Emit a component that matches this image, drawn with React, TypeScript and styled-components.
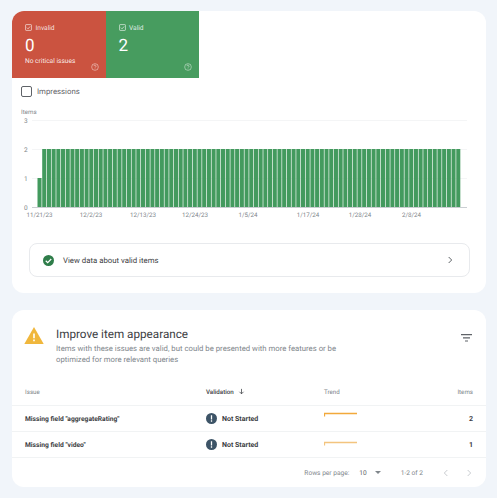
import React from 'react';
import styled, { createGlobalStyle } from 'styled-components';

const GlobalStyle = createGlobalStyle`
  html, body {
    margin: 0;
    background: #f1f5fa;
    font-family: Roboto, "Liberation Sans", sans-serif;
    color: #3c4043;
    text-rendering: geometricPrecision;
  }
`;

const BAR_COUNT = 90;
const BAR_PITCH = 4.705;
const dateLabels = [
  { x: 39.5, text: '11/21/23' },
  { x: 91, text: '12/2/23' },
  { x: 143, text: '12/13/23' },
  { x: 195, text: '12/24/23' },
  { x: 248, text: '1/5/24' },
  { x: 308, text: '1/17/24' },
  { x: 360, text: '1/28/24' },
  { x: 411.5, text: '2/8/24' },
];
const issues = [
  { name: 'Missing field "aggregateRating"', level: 7.5, colour: '#f2a93b', items: 2 },
  { name: 'Missing field "video"', level: 10.5, colour: '#f3c47e', items: 1 },
];

const HelpIcon: React.FC = () => (
  <svg width="8" height="8" viewBox="0 0 24 24" fill="none" stroke="rgba(255,255,255,.65)" strokeWidth="2">
    <circle cx="12" cy="12" r="10" />
    <path d="M9 9.5a3 3 0 1 1 4.6 2.5c-1 .7-1.6 1.3-1.6 2.5M12 16.5v2" />
  </svg>
);

const TileCheck: React.FC = () => (
  <svg width="7" height="7" viewBox="0 0 24 24" fill="none" stroke="rgba(255,255,255,.85)" strokeWidth="2.4">
    <rect x="2" y="2" width="20" height="20" rx="2" />
    <path d="M6.5 12.5l4 4 7-8" />
  </svg>
);

const Chart: React.FC = () => (
  <ChartSvg width="474" height="106" viewBox="0 0 474 106">
    <text x="9" y="9" fontSize="6.2" fill="#80868b">Items</text>
    {[3, 2, 1, 0].map((tick, i) => (
      <g key={tick}>
        <line x1="20" x2="455" y1={15.5 + i * 29} y2={15.5 + i * 29} stroke={tick === 0 ? '#bdc1c6' : '#f1f3f4'} strokeWidth="0.8" />
        <text x="12" y={18 + i * 29} fontSize="6.5" fill="#80868b">{tick}</text>
      </g>
    ))}
    {Array.from({ length: BAR_COUNT }, (_, i) => (
      <rect
        key={i}
        x={25.5 + i * BAR_PITCH}
        y={i === 0 ? 73 : 44}
        width={BAR_PITCH - 0.65}
        height={i === 0 ? 29 : 58}
        fill="#439a5e"
      />
    ))}
  </ChartSvg>
);

const App: React.FC = () => (
  <Page>
    <GlobalStyle />
    <Card>
      <Tiles>
        <Tile $colour="#cb5340">
          <TileLabel><TileCheck />Invalid</TileLabel>
          <TileValue>0</TileValue>
          <TileNote>No critical issues</TileNote>
          <TileHelp><HelpIcon /></TileHelp>
        </Tile>
        <Tile $colour="#479c5f">
          <TileLabel><TileCheck />Valid</TileLabel>
          <TileValue>2</TileValue>
          <TileHelp><HelpIcon /></TileHelp>
        </Tile>
      </Tiles>
      <Impressions>
        <CheckBox />
        Impressions
      </Impressions>
      <Chart />
      <DateAxis>
        {dateLabels.map((label) => (
          <DateLabel key={label.text} style={{ left: label.x - 12 }}>{label.text}</DateLabel>
        ))}
      </DateAxis>
      <ValidLink>
        <svg width="11" height="11" viewBox="0 0 24 24">
          <circle cx="12" cy="12" r="12" fill="#2f7d4a" />
          <path d="M6 12.5l4.2 4.2L18 8.8" fill="none" stroke="#fff" strokeWidth="2.6" />
        </svg>
        <ValidText>View data about valid items</ValidText>
        <svg width="8" height="8" viewBox="0 0 24 24" fill="none" stroke="#5f6368" strokeWidth="3">
          <path d="M8 3l9 9-9 9" />
        </svg>
      </ValidLink>
    </Card>
    <Card>
      <Heading>
        <svg width="20" height="17" viewBox="0 0 24 21">
          <path d="M12 0L24 21H0z" fill="#f0b73c" />
          <path d="M11 8h2v6h-2zM11 15.5h2v2h-2z" fill="#fff" />
        </svg>
        <HeadingText>
          <Title>Improve item appearance</Title>
          <Description>
            Items with these issues are valid, but could be presented with more features or be optimized for more
            relevant queries
          </Description>
        </HeadingText>
        <FilterIcon width="11" height="8" viewBox="0 0 11 8">
          <path d="M0 0h11v1.2H0zM2 3.2h7v1.2H2zM4 6.4h3v1.2H4z" fill="#5f6368" />
        </FilterIcon>
      </Heading>
      <Row $header>
        <HeaderCell>Issue</HeaderCell>
        <SortCell>
          Validation
          <svg width="7" height="7" viewBox="0 0 24 24" fill="none" stroke="#3c4043" strokeWidth="2.6">
            <path d="M12 3v17M5 13l7 7 7-7" />
          </svg>
        </SortCell>
        <HeaderCell>Trend</HeaderCell>
        <HeaderCell $right>Items</HeaderCell>
      </Row>
      {issues.map((issue) => (
        <Row key={issue.name}>
          <IssueName>{issue.name}</IssueName>
          <Status>
            <svg width="11" height="11" viewBox="0 0 24 24">
              <circle cx="12" cy="12" r="12" fill="#3d5467" />
              <path d="M10.6 5h2.8v9h-2.8zM10.6 16h2.8v3h-2.8z" fill="#fff" />
            </svg>
            Not Started
          </Status>
          <svg width="34" height="25" viewBox="0 0 34 25">
            <path d={`M0.5 ${issue.level + 3}V${issue.level}H33`} fill="none" stroke={issue.colour} strokeWidth="1.3" />
          </svg>
          <ItemCount>{issue.items}</ItemCount>
        </Row>
      ))}
      <Pagination>
        <span>Rows per page:</span>
        <PageSize>10</PageSize>
        <Caret />
        <PageRange>1-2 of 2</PageRange>
        <svg width="8" height="8" viewBox="0 0 24 24" fill="none" stroke="#bdc1c6" strokeWidth="2.5">
          <path d="M16 3l-9 9 9 9" />
        </svg>
        <NextIcon width="8" height="8" viewBox="0 0 24 24" fill="none" stroke="#bdc1c6" strokeWidth="2.5">
          <path d="M8 3l9 9-9 9" />
        </NextIcon>
      </Pagination>
    </Card>
  </Page>
);

const Page = styled.div`
  display: flex;
  flex-direction: column;
  gap: 17px;
  width: 474px;
  padding: 11px 11px 11px 12px;
`;

const Card = styled.section`
  background: #fff;
  border-radius: 12px;
  overflow: hidden;
`;

const Tiles = styled.div`
  display: flex;
`;

const Tile = styled.div<{ $colour: string }>`
  position: relative;
  box-sizing: border-box;
  width: 93.5px;
  height: 66.5px;
  padding: 13px 0 0 13px;
  background: ${(props) => props.$colour};
  color: #fff;
`;

const TileLabel = styled.div`
  display: flex;
  align-items: center;
  gap: 3.5px;
  height: 7px;
  font-size: 6.6px;
  color: rgba(255, 255, 255, 0.85);
`;

const TileValue = styled.div`
  margin-top: 4px;
  font-size: 17px;
  line-height: 22px;
`;

const TileNote = styled.div`
  font-size: 6.6px;
  line-height: 9px;
  color: rgba(255, 255, 255, 0.9);
`;

const TileHelp = styled.div`
  position: absolute;
  right: 7px;
  bottom: 7px;
  display: flex;
`;

const Impressions = styled.div`
  display: flex;
  align-items: center;
  gap: 5px;
  height: 11px;
  margin: 8px 0 0 9px;
  font-size: 7.8px;
  color: #5f6368;
`;

const CheckBox = styled.span`
  box-sizing: border-box;
  width: 11px;
  height: 11px;
  border: 1.2px solid #5f6368;
  border-radius: 2px;
`;

const ChartSvg = styled.svg`
  display: block;
  margin-top: 8.5px;
`;

const DateAxis = styled.div`
  position: relative;
  height: 8px;
`;

const DateLabel = styled.span`
  position: absolute;
  top: 0;
  transform: translateX(-50%);
  font-size: 6.2px;
  line-height: 8px;
  color: #80868b;
  white-space: nowrap;
`;

const ValidLink = styled.div`
  display: flex;
  align-items: center;
  box-sizing: border-box;
  height: 34px;
  margin: 24px 16px 16px 17px;
  padding: 0 15px 0 13px;
  border: 1px solid #e8eaed;
  border-radius: 8px;
`;

const ValidText = styled.span`
  flex: 1;
  margin-left: 9px;
  font-size: 7.8px;
`;

const Heading = styled.div`
  display: flex;
  align-items: flex-start;
  box-sizing: border-box;
  height: 68px;
  padding: 17px 14px 0 12px;
`;

const HeadingText = styled.div`
  flex: 1;
  margin-left: 12px;
`;

const Title = styled.div`
  font-size: 11.7px;
  line-height: 14px;
`;

const Description = styled.div`
  width: 300px;
  margin-top: 3px;
  font-size: 7.75px;
  line-height: 10.5px;
  color: #80868b;
`;

const FilterIcon = styled.svg`
  margin-top: 7px;
`;

const Row = styled.div<{ $header?: boolean }>`
  display: grid;
  grid-template-columns: 181px 118px 1fr 40px;
  align-items: center;
  box-sizing: border-box;
  height: ${(props) => (props.$header ? '28px' : '26px')};
  padding: 0 13px;
  border-bottom: ${(props) => (props.$header ? '1.5px' : '1px')} solid #f1f3f4;
`;

const HeaderCell = styled.span<{ $right?: boolean }>`
  font-size: 6.2px;
  color: #80868b;
  text-align: ${(props) => (props.$right ? 'right' : 'left')};
`;

const SortCell = styled.span`
  display: flex;
  align-items: center;
  gap: 4px;
  font-size: 6.2px;
  font-weight: 500;
`;

const IssueName = styled.span`
  font-size: 6.7px;
  font-weight: 700;
`;

const Status = styled.span`
  display: flex;
  align-items: center;
  gap: 5px;
  font-size: 7px;
  font-weight: 700;
`;

const ItemCount = styled.span`
  font-size: 7px;
  font-weight: 700;
  text-align: right;
`;

const Pagination = styled.div`
  display: flex;
  align-items: center;
  justify-content: flex-end;
  height: 29px;
  padding: 0 13px;
  font-size: 6.6px;
  color: #80868b;
`;

const PageSize = styled.span`
  margin-left: 10px;
  color: #5f6368;
`;

const Caret = styled.span`
  width: 0;
  height: 0;
  margin-left: 8px;
  border-top: 3px solid #80868b;
  border-left: 3px solid transparent;
  border-right: 3px solid transparent;
`;

const PageRange = styled.span`
  margin: 0 19px 0 20px;
`;

const NextIcon = styled.svg`
  margin-left: 15px;
`;

export default App;
